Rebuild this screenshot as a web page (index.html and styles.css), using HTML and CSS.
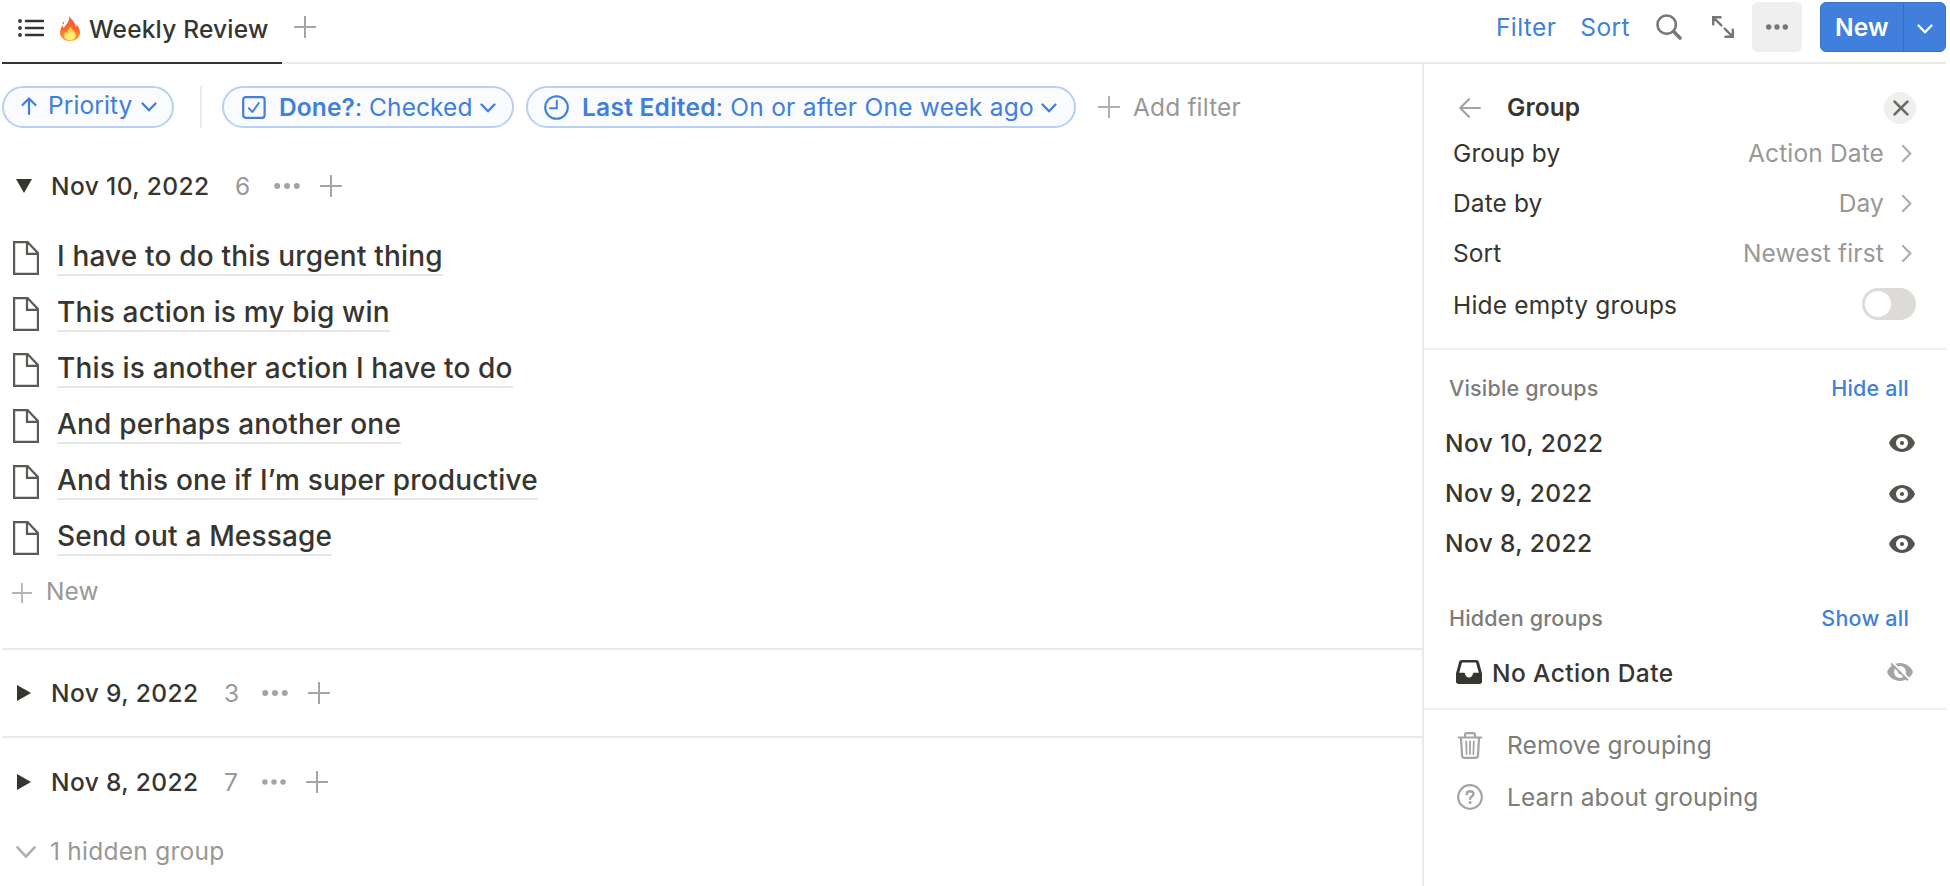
FILE: index.html
```
<!DOCTYPE html>
<html lang="en">
<head>
  <meta charset="UTF-8">
  <title>Weekly Review</title>
  <meta name="viewport" content="width=device-width, initial-scale=1.0">
  <link rel="stylesheet" href="styles.css">
</head>
<body>
<!-- shared icons -->
<svg class="defs" width="0" height="0">
  <defs>
    <symbol id="plus" viewBox="0 0 22 22"><path d="M11 0.8V21.2M0.8 11H21.2" fill="none" stroke="currentColor" stroke-width="2" stroke-linecap="round"/></symbol>
    <symbol id="dots" viewBox="0 0 26 8"><circle cx="3.2" cy="4" r="3"/><circle cx="13" cy="4" r="3"/><circle cx="22.8" cy="4" r="3"/></symbol>
    <symbol id="down" viewBox="0 0 16 10"><path d="M1.5 1.5L8 8.3L14.5 1.5" fill="none" stroke="currentColor" stroke-width="2.3" stroke-linecap="round" stroke-linejoin="round"/></symbol>
    <symbol id="right" viewBox="0 0 11 19"><path d="M1.3 1.3L9.3 9.5L1.3 17.7" fill="none" stroke="currentColor" stroke-width="2.2"/></symbol>
    <symbol id="page" viewBox="0 0 26 34"><path d="M1.1 1.1H14.6L24.9 12V32.9H1.1Z M14 1.1V12.8H24.9" fill="none" stroke="currentColor" stroke-width="2.2"/></symbol>
    <symbol id="eye" viewBox="0 0 26 18"><path fill-rule="evenodd" d="M13 0C7 0 2.2 3.6 0 9C2.2 14.4 7 18 13 18S23.8 14.4 26 9C23.8 3.6 19 0 13 0ZM13 3A6 6 0 1 1 13 15A6 6 0 1 1 13 3Z"/><circle cx="13" cy="9" r="2.1"/></symbol>
  </defs>
</svg>

<div class="page">
  <header class="topbar">
    <div class="tab">
      <svg class="list-icon" width="26" height="18" viewBox="0 0 26 18"><path d="M8 2H25M8 9H25M8 16H25" stroke="currentColor" stroke-width="2.4" stroke-linecap="round"/><circle cx="2" cy="2" r="1.9"/><circle cx="2" cy="9" r="1.9"/><circle cx="2" cy="16" r="1.9"/></svg>
      <svg class="fire" width="20" height="25" viewBox="0 0 20 25">
        <defs>
          <linearGradient id="flame" x1="0" y1="0" x2="0" y2="1"><stop offset="0" stop-color="#f4553a"/><stop offset=".55" stop-color="#fb6a2c"/><stop offset="1" stop-color="#ffab2e"/></linearGradient>
          <linearGradient id="core" x1="0" y1="0" x2="0" y2="1"><stop offset="0" stop-color="#ffb52e"/><stop offset=".5" stop-color="#ffe45c"/><stop offset="1" stop-color="#fff6a8"/></linearGradient>
        </defs>
        <path fill="url(#flame)" d="M9.3 0C10.3 3 15.8 6 15.8 11.2C16.6 10.6 16.8 9.4 16.6 8.2C19 11 20 14 20 16.5C20 21.8 15.6 25 10 25S0 21.8 0 16.4C0 13 1.6 11.4 2.4 9.2C3 10.2 3.4 11 3.6 12.2C4.8 9.6 9.9 6.6 9.3 0Z"/>
        <path fill="#fb6a3a" d="M3 5.6C4.4 6.4 4.4 7.6 3.4 8.4C2.4 7.6 2.4 6.6 3 5.6Z"/>
        <path fill="url(#core)" d="M10.8 10.2C10.6 13.4 15.4 14.6 15.6 18.8C15.7 22 13.4 24.2 10 24.2S4.2 22 4.2 19.2C4.2 17.4 5 16.2 5.8 15.2C6.2 16.4 6.8 17 7.6 17.2C7 14.4 8.8 12 10.8 10.2Z"/>
      </svg>
      <span class="t tab-name">Weekly Review</span>
    </div>
    <svg class="add-view" width="22" height="22"><use href="#plus"/></svg>
    <div class="tools">
      <span class="t tool filter">Filter</span>
      <span class="t tool sort">Sort</span>
      <svg class="search" width="26" height="26" viewBox="0 0 26 26"><circle cx="10.7" cy="10.7" r="9.2" fill="none" stroke="currentColor" stroke-width="2.6"/><path d="M17.6 17.6L24 24" stroke="currentColor" stroke-width="3.6" stroke-linecap="round"/></svg>
      <svg class="expand" width="22" height="22" viewBox="0 0 22 22"><path d="M1.2 8.4V1.2H8.6M1.5 1.5L9.3 9.3M20.8 13.6V20.8H13.4M20.5 20.5L12.7 12.7" fill="none" stroke="currentColor" stroke-width="2.4" stroke-linecap="round"/></svg>
      <div class="more"><svg width="22" height="8" viewBox="0 0 22 8"><circle cx="2.7" cy="4" r="2.7"/><circle cx="11" cy="4" r="2.7"/><circle cx="19.3" cy="4" r="2.7"/></svg></div>
      <div class="new-btn">
        <span class="new-label"><span class="t">New</span></span>
        <span class="new-arrow"><svg width="16" height="10"><use href="#down"/></svg></span>
      </div>
    </div>
  </header>

  <div class="body">
    <main class="list">
      <div class="filters">
        <div class="pill priority">
          <svg width="16" height="18" viewBox="0 0 16 18"><path d="M8 17V1.6M1.5 8L8 1.5L14.5 8" fill="none" stroke="currentColor" stroke-width="2.2" stroke-linecap="round" stroke-linejoin="round"/></svg>
          <span class="t pill-text">Priority</span>
          <svg class="caret" width="16" height="10"><use href="#down"/></svg>
        </div>
        <div class="bar"></div>
        <div class="pill done">
          <svg width="24" height="23" viewBox="0 0 24 23"><rect x="1.2" y="1.2" width="21.4" height="20.6" rx="2.5" fill="none" stroke="currentColor" stroke-width="2.2"/><path d="M6.8 12.2L10.4 16L16.8 7" fill="none" stroke="currentColor" stroke-width="1.9" stroke-linecap="round" stroke-linejoin="round"/></svg>
          <span class="t pill-text"><b>Done?</b>: Checked</span>
          <svg class="caret" width="16" height="10"><use href="#down"/></svg>
        </div>
        <div class="pill edited">
          <svg width="25" height="25" viewBox="0 0 25 25"><circle cx="12.5" cy="12.5" r="11.3" fill="none" stroke="currentColor" stroke-width="2.1"/><path d="M12.8 5.6V13.2H6" fill="none" stroke="currentColor" stroke-width="1.9" stroke-linecap="round"/></svg>
          <span class="t pill-text"><b>Last Edited</b>: On or after One week ago</span>
          <svg class="caret" width="16" height="10"><use href="#down"/></svg>
        </div>
        <div class="add-filter">
          <svg width="22" height="22"><use href="#plus"/></svg>
          <span class="t">Add filter</span>
        </div>
      </div>

      <section class="group open">
        <div class="group-head">
          <svg class="toggle" width="16" height="16" viewBox="0 0 16 16"><path d="M0 1H16L8 15Z"/></svg>
          <span class="t date group-name">Nov 10, 2022</span>
          <span class="t count">6</span>
          <svg class="dots" width="26" height="8"><use href="#dots"/></svg>
          <svg class="add" width="22" height="22"><use href="#plus"/></svg>
        </div>
        <ul class="tasks">
          <li><svg width="26" height="34"><use href="#page"/></svg><span class="t">I have to do this urgent thing</span></li>
          <li><svg width="26" height="34"><use href="#page"/></svg><span class="t">This action is my big win</span></li>
          <li><svg width="26" height="34"><use href="#page"/></svg><span class="t">This is another action I have to do</span></li>
          <li><svg width="26" height="34"><use href="#page"/></svg><span class="t">And perhaps another one</span></li>
          <li><svg width="26" height="34"><use href="#page"/></svg><span class="t">And this one if I’m super productive</span></li>
          <li><svg width="26" height="34"><use href="#page"/></svg><span class="t">Send out a Message</span></li>
        </ul>
        <div class="new-row">
          <svg width="20" height="22"><use href="#plus"/></svg>
          <span class="t">New</span>
        </div>
      </section>

      <section class="group">
        <div class="group-head">
          <svg class="toggle" width="14" height="16" viewBox="0 0 14 16"><path d="M0 0L14 8L0 16Z"/></svg>
          <span class="t date group-name">Nov 9, 2022</span>
          <span class="t count">3</span>
          <svg class="dots" width="26" height="8"><use href="#dots"/></svg>
          <svg class="add" width="22" height="22"><use href="#plus"/></svg>
        </div>
      </section>

      <section class="group last">
        <div class="group-head">
          <svg class="toggle" width="14" height="16" viewBox="0 0 14 16"><path d="M0 0L14 8L0 16Z"/></svg>
          <span class="t date group-name">Nov 8, 2022</span>
          <span class="t count">7</span>
          <svg class="dots" width="24" height="8"><use href="#dots"/></svg>
          <svg class="add" width="22" height="22"><use href="#plus"/></svg>
        </div>
      </section>

      <div class="hidden-row">
        <svg width="20" height="13" viewBox="0 0 20 13"><path d="M1.4 1.4L10 10.6L18.6 1.4" fill="none" stroke="currentColor" stroke-width="2.6" stroke-linecap="round"/></svg>
        <span class="t">1 hidden group</span>
      </div>
    </main>

    <aside class="panel">
      <div class="panel-head">
        <svg class="back" width="22" height="20" viewBox="0 0 22 20"><path d="M21 10H1.5M10 1.2L1.2 10L10 18.8" fill="none" stroke="currentColor" stroke-width="2.2" stroke-linecap="round" stroke-linejoin="round"/></svg>
        <span class="t panel-title">Group</span>
        <span class="close"><svg width="16" height="16" viewBox="0 0 16 16"><path d="M1.6 1.6L14.4 14.4M14.4 1.6L1.6 14.4" stroke="currentColor" stroke-width="2.7" stroke-linecap="round"/></svg></span>
      </div>
      <div class="option"><span class="t">Group by</span><span class="t value">Action Date</span><svg width="11" height="19"><use href="#right"/></svg></div>
      <div class="option"><span class="t">Date by</span><span class="t value">Day</span><svg width="11" height="19"><use href="#right"/></svg></div>
      <div class="option"><span class="t">Sort</span><span class="t value">Newest first</span><svg width="11" height="19"><use href="#right"/></svg></div>
      <div class="option switch-row"><span class="t">Hide empty groups</span><span class="switch"></span></div>

      <div class="groups">
        <div class="caption"><span>Visible groups</span><span class="action">Hide all</span></div>
        <div class="entry"><span class="t date">Nov 10, 2022</span><svg class="eye" width="26" height="18"><use href="#eye"/></svg></div>
        <div class="entry"><span class="t date">Nov 9, 2022</span><svg class="eye" width="26" height="18"><use href="#eye"/></svg></div>
        <div class="entry"><span class="t date">Nov 8, 2022</span><svg class="eye" width="26" height="18"><use href="#eye"/></svg></div>
        <div class="caption hidden"><span>Hidden groups</span><span class="action">Show all</span></div>
        <div class="entry no-date">
          <svg class="inbox" width="26" height="24" viewBox="0 0 26 24"><path fill-rule="evenodd" d="M6 0H20C21.6 0 22.6 .8 23 2.2L26 13.5V21.5C26 23 25 24 23.5 24H2.5C1 24 0 23 0 21.5V13.5L3 2.2C3.4 .8 4.4 0 6 0ZM6 2.6L3.2 12.8H7.6C8.6 12.8 9 13.3 9.2 14.2C9.6 16 11 17.4 13 17.4S16.4 16 16.8 14.2C17 13.3 17.4 12.8 18.4 12.8H22.8L20 2.6Z"/></svg>
          <span class="t date">No Action Date</span>
          <svg class="eye-off" width="26" height="18" viewBox="0 0 26 18"><use href="#eye"/><path d="M5.7 -0.5L22.7 16.3" stroke="#fff" stroke-width="1.8"/><path d="M4 .3L21 17.4" stroke="currentColor" stroke-width="1.8"/></svg>
        </div>
      </div>

      <div class="links">
        <div class="link">
          <svg width="26" height="27" viewBox="0 0 26 27"><path d="M1.8 5.5H24.2M8 5V3C8 1.8 8.7 1.2 9.8 1.2H16.2C17.3 1.2 18 1.8 18 3V5M4 5.8L5 23.4C5.1 25 6 25.8 7.4 25.8H18.6C20 25.8 20.9 25 21 23.4L22 5.8" fill="none" stroke="currentColor" stroke-width="2.2" stroke-linecap="round"/><path d="M9.2 9.5L9.6 22M13 9.5V22M16.8 9.5L16.4 22" stroke="currentColor" stroke-width="1.8" stroke-linecap="round"/></svg>
          <span class="t">Remove grouping</span>
        </div>
        <div class="link learn">
          <svg width="26" height="26" viewBox="0 0 26 26"><circle cx="13" cy="13" r="11.8" fill="none" stroke="currentColor" stroke-width="2.2"/><path d="M9.7 10.2C9.7 8.2 11.1 7.2 13.1 7.2S16.5 8.3 16.5 10.1C16.5 12.5 13.1 12.5 13.1 14.9" fill="none" stroke="currentColor" stroke-width="2.4" stroke-linecap="round"/><circle cx="13.1" cy="18.5" r="1.5"/></svg>
          <span class="t">Learn about grouping</span>
        </div>
      </div>
    </aside>
  </div>
</div>
</body>
</html>
```
FILE: styles.css
```
* { box-sizing: border-box; }
body { margin: 0; background: #fff; color: #37352f; font-family: Inter, "Liberation Sans", sans-serif; font-size: 24.5px; line-height: 30px; letter-spacing: 0.1px; }
svg { display: block; flex: none; fill: currentColor; overflow: visible; }
.defs { position: absolute; }
.t { white-space: nowrap; }
b { font-weight: 600; }
.page { width: 1946px; height: 886px; padding-left: 2px; overflow: hidden; }

/* top bar */
.topbar { display: flex; height: 64px; border-bottom: 2px solid #e9e9e7; }
.tab { display: flex; align-items: center; width: 280px; height: 64px; padding: 0 0 6px 16px; border-bottom: 2px solid #37352f; }
.fire { margin-left: 16px; }
.tab-name { margin: 2px 0 0 9px; font-weight: 500; letter-spacing: 0.2px; }
.add-view { margin: 16px 0 0 12px; color: #a5a4a1; }
.tools { display: flex; align-items: center; height: 54px; margin-left: auto; color: #777673; }
.tool { color: #407fdb; letter-spacing: 0.4px; }
.sort { margin-left: 24px; }
.search { margin-left: 26px; }
.expand { margin-left: 30px; }
.more { display: flex; align-items: center; justify-content: center; width: 50px; height: 50px; margin-left: 18px; border-radius: 6px; background: #efefef; }
.new-btn { display: flex; width: 126px; height: 50px; margin-left: 18px; border: 1px solid #3a74c9; border-radius: 6px; background: #407fdb; color: #fff; }
.new-label { display: flex; align-items: center; width: 83px; padding-left: 14px; border-right: 1px solid #366fc2; font-weight: 600; }
.new-arrow { display: flex; flex: 1; align-items: center; justify-content: center; padding-top: 4px; }

.body { display: flex; height: 822px; }
.list { width: 1420px; }

/* sort and filter pills */
.filters { display: flex; align-items: center; height: 42px; margin-top: 22px; }
.pill { display: flex; align-items: center; height: 42px; border: 2px solid #b7d0f3; border-radius: 21px; background: #f9fbff; color: #407fdb; }
.priority { width: 172px; padding: 0 0 3px 17px; }
.priority .pill-text { margin-left: 11px; padding-bottom: 2px; }
.caret { margin: 3px 15px 0 auto; }
.bar { width: 2px; height: 42px; margin: 0 20px 0 26px; background: #e9e9e7; }
.done { width: 292px; padding-left: 18px; }
.done .pill-text { margin-left: 13px; }
.done .caret { margin: 2px 16px 0 auto; }
.edited { width: 550px; margin-left: 12px; padding-left: 16px; }
.edited .pill-text { margin-left: 13px; letter-spacing: 0.26px; }
.edited .caret { margin: 2px 17px 0 auto; }
.add-filter { display: flex; align-items: center; margin-left: 22px; color: #999895; }
.add-filter svg { color: #b0afac; }
.add-filter .t { margin-left: 13px; letter-spacing: 0.15px; }

/* date groups */
.date { font-weight: 500; letter-spacing: 0.4px; }
.group { height: 88px; border-bottom: 2px solid #e9e9e7; }
.group.open { height: 490px; margin-top: 32px; }
.group.last { height: 87px; border-bottom: 0; }
.group-head { display: flex; align-items: center; height: 100%; padding-left: 15px; }
.open .group-head { height: 51px; padding-left: 14px; }
.group-name { width: 173px; margin-left: 20px; }
.open .group-name { width: 184px; margin-left: 19px; }
.count { width: 38px; color: #999895; }
.open .count { width: 39px; }
.dots { color: #a5a4a1; }
.add { margin-left: 20px; color: #a5a4a1; }
.tasks { margin: 17px 0 0; padding: 0 0 0 11px; list-style: none; }
.tasks li { display: flex; align-items: flex-start; height: 56px; padding-top: 9px; }
.tasks svg { margin-top: 4px; color: #5b5954; }
.tasks .t { margin-left: 18px; padding-top: 2px; border-bottom: 2px solid #e6e6e4; font-size: 28px; font-weight: 500; line-height: 35px; letter-spacing: 0.17px; }
.new-row { display: flex; align-items: center; height: 54px; padding-left: 10px; color: #999895; }
.new-row svg { margin-top: 4px; color: #b5b4b1; }
.new-row .t { margin-left: 14px; }
.hidden-row { display: flex; align-items: center; height: 52px; padding-left: 14px; color: #999895; }
.hidden-row svg { margin-top: 3px; color: #b0afac; }
.hidden-row .t { margin-left: 14px; letter-spacing: 0.25px; }

/* group settings */
.panel { width: 524px; border-left: 2px solid #e9e9e7; }
.panel-head { display: flex; align-items: center; height: 64px; padding: 24px 30px 0 35px; }
.back { color: #a5a4a1; }
.panel-title { margin-left: 26px; padding-bottom: 2px; font-weight: 600; }
.close { display: flex; align-items: center; justify-content: center; width: 32px; height: 32px; margin-left: auto; padding-left: 2px; border-radius: 50%; background: #efefee; color: #6b6a66; }
.option { display: flex; align-items: center; height: 50px; padding: 0 34px 0 29px; }
.option svg { margin-left: 17px; color: #b0afac; }
.value { margin-left: auto; color: #999895; letter-spacing: 0.15px; }
.switch-row { height: 54px; padding-right: 30px; letter-spacing: 0.18px; }
.switch { width: 54px; height: 32px; margin: -2px 0 0 auto; padding: 3px; border-radius: 16px; background: #dcdbd7; }
.switch::before { content: ""; display: block; width: 26px; height: 26px; border-radius: 50%; background: #fff; }
.groups { height: 362px; margin-top: 16px; border-top: 2px solid #eeeeec; border-bottom: 2px solid #eeeeec; }
.caption { display: flex; justify-content: space-between; padding: 23px 37px 15px 25px; color: #7d7c78; font-size: 21.5px; font-weight: 500; letter-spacing: 0.2px; }
.action { color: #407fdb; }
.entry { display: flex; align-items: center; height: 50px; padding: 0 31px 0 21px; }
.eye { margin-left: auto; color: #55534e; }
.entry + .entry .eye { margin-top: 2px; }
.caption.hidden { padding-top: 35px; padding-bottom: 16px; }
.no-date { height: 46px; padding: 0 33px 0 32px; }
.no-date .t { margin-left: 10px; padding-top: 2px; }
.eye-off { margin-left: auto; color: #a5a4a1; }
.links { padding: 10px 0 0 33px; color: #7d7c78; }
.link { display: flex; align-items: center; height: 50px; }
.link svg { color: #a5a4a1; }
.link .t { margin-left: 24px; }
.learn { height: 53px; }
```
